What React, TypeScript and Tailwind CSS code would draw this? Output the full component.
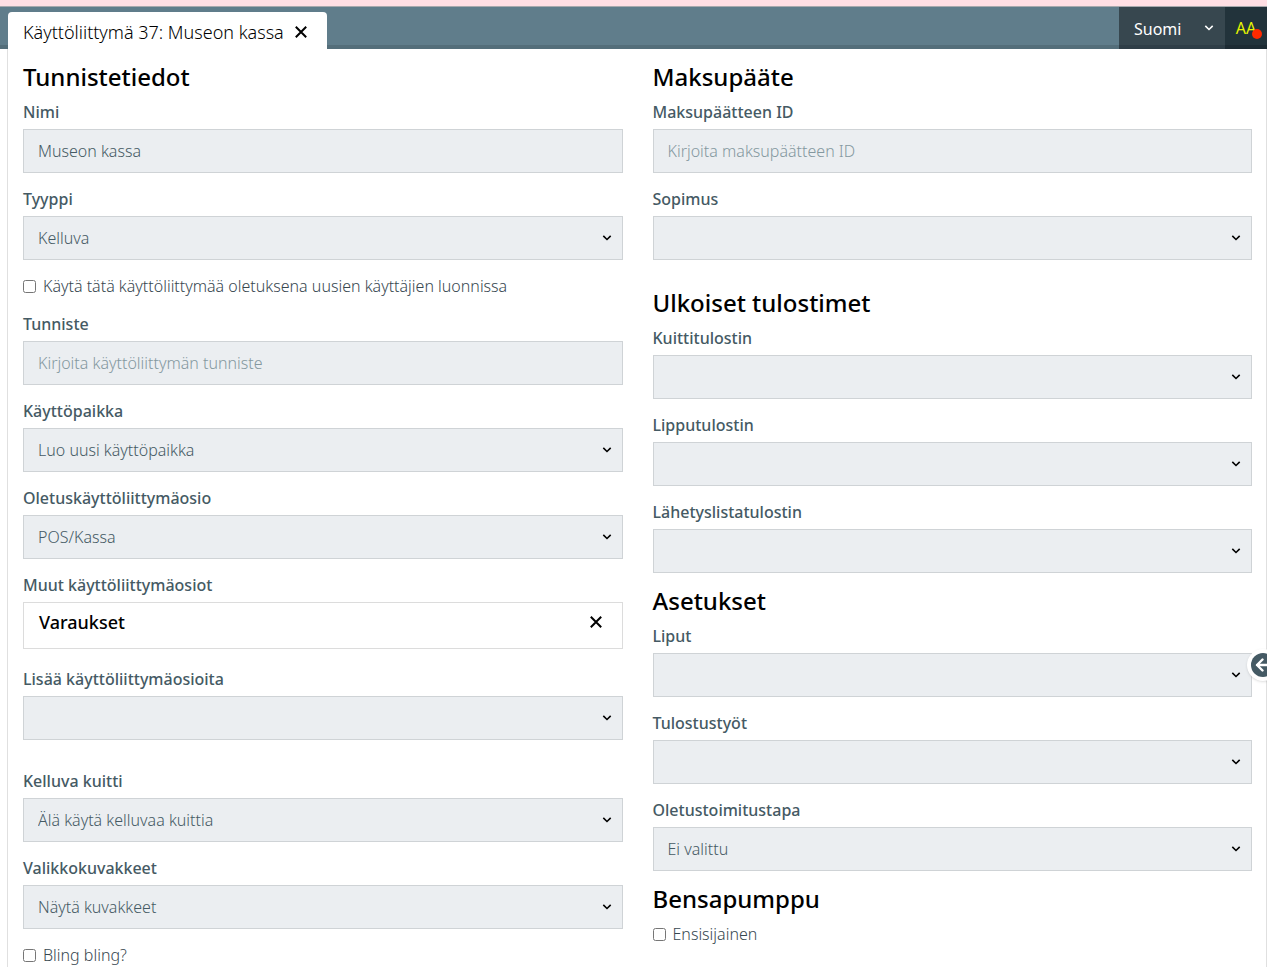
import React, { useState } from "react";

interface FieldProps {
    id: string;
    label: string;
}

interface TextFieldProps extends FieldProps {
    value?: string;
    placeholder?: string;
}

interface SelectFieldProps extends FieldProps {
    options?: string[];
}

const Chevron = ({ className }: { className: string }) => (
    <svg
        viewBox="0 0 10 6"
        aria-hidden="true"
        className={`pointer-events-none absolute h-[6px] w-[10px] ${className}`}
        fill="none"
        stroke="currentColor"
        strokeWidth="1.6"
    >
        <path d="M1.3 0.9 L5 4.5 L8.7 0.9" />
    </svg>
);

const Cross = () => (
    <svg viewBox="0 0 12 12" aria-hidden="true" className="h-3 w-3" stroke="currentColor" strokeWidth="2">
        <path d="M0.8 0.8 L11.2 11.2 M11.2 0.8 L0.8 11.2" />
    </svg>
);

const TextField: React.FC<TextFieldProps> = ({ id, label, value, placeholder }) => (
    <div className="flex flex-col gap-[5px]">
        <label htmlFor={id} className="text-base leading-6 font-medium text-[#455a64]">
            {label}
        </label>
        <input
            id={id}
            type="text"
            defaultValue={value}
            placeholder={placeholder}
            className="h-11 w-full border border-[#cfd3d6] bg-[#ebeef1] px-[14px] text-base font-light text-[#455a64] placeholder:text-[#84989f]"
        />
    </div>
);

const SelectField: React.FC<SelectFieldProps> = ({ id, label, options = [""] }) => (
    <div className="flex flex-col gap-[5px]">
        <label htmlFor={id} className="text-base leading-6 font-medium text-[#455a64]">
            {label}
        </label>
        <div className="relative">
            <select
                id={id}
                className="block h-11 w-full appearance-none border border-[#cfd3d6] bg-[#ebeef1] px-[14px] text-base font-light text-[#455a64]"
            >
                {options.map((option) => (
                    <option key={option}>{option}</option>
                ))}
            </select>
            <Chevron className="top-[19px] right-[11px] text-black" />
        </div>
    </div>
);

const CheckField: React.FC<FieldProps> = ({ id, label }) => (
    <div className="flex h-6 items-center gap-[7px]">
        <input id={id} type="checkbox" className="h-[13px] w-[13px]" />
        <label htmlFor={id} className="text-base leading-6 font-light text-[#37474f]">
            {label}
        </label>
    </div>
);

const Section = ({ title, children }: { title: string; children: React.ReactNode }) => (
    <section>
        <h2 className="mb-[7px] text-2xl leading-8 font-medium text-black">{title}</h2>
        <div className="flex flex-col gap-[14px]">{children}</div>
    </section>
);

const Header = () => (
    <header className="flex justify-between border-t border-[#a7a9ad] bg-[#607d8b] pl-2 shadow-[inset_0_-4px_0_#546e7a]">
        <div className="mt-[5px] flex h-[37px] items-center gap-[11px] rounded-t bg-white pt-[3px] pr-5 pl-[15px]">
            <h1 className="text-lg font-light text-black">Käyttöliittymä 37: Museon kassa</h1>
            <button type="button" aria-label="Sulje välilehti">
                <Cross />
            </button>
        </div>
        <div className="flex">
            <div className="relative">
                <select
                    aria-label="Kieli"
                    className="h-full w-[106px] appearance-none bg-[#37474f] pt-[2px] pl-[15px] text-base text-white shadow-[inset_0_-4px_0_#2f3e47]"
                >
                    <option>Suomi</option>
                </select>
                <Chevron className="top-[18px] right-[11px] text-white" />
            </div>
            <button
                type="button"
                className="relative w-[42px] bg-[#22333b] text-base text-[#e6f500] shadow-[inset_0_-4px_0_#1d2b33]"
            >
                AA
                <span className="absolute right-[5px] bottom-[10px] h-[10px] w-[10px] rounded-full bg-[#ff2a00]" />
            </button>
        </div>
    </header>
);

const App = () => {
    const [parts, setParts] = useState(["Varaukset"]);

    return (
        <div className="relative flex min-h-screen flex-col overflow-hidden bg-white font-['Noto_Sans','Open_Sans',sans-serif]">
            <div className="h-[6px] bg-[#ffdfe4]" />
            <Header />
            <main className="ml-[7px] grid grow grid-cols-2 gap-[30px] border-x border-[#e0e0e0] pt-3 pr-[14px] pl-[15px]">
                <Section title="Tunnistetiedot">
                    <TextField id="name" label="Nimi" value="Museon kassa" />
                    <SelectField id="type" label="Tyyppi" options={["Kelluva"]} />
                    <CheckField id="default" label="Käytä tätä käyttöliittymää oletuksena uusien käyttäjien luonnissa" />
                    <TextField id="identifier" label="Tunniste" placeholder="Kirjoita käyttöliittymän tunniste" />
                    <SelectField id="place" label="Käyttöpaikka" options={["Luo uusi käyttöpaikka"]} />
                    <SelectField id="part" label="Oletuskäyttöliittymäosio" options={["POS/Kassa"]} />
                    <div className="mb-1 flex flex-col gap-[5px]">
                        <h3 className="text-base leading-6 font-medium text-[#455a64]">Muut käyttöliittymäosiot</h3>
                        <ul className="border border-[#dcdcdc]">
                            {parts.map((part) => (
                                <li
                                    key={part}
                                    className="flex h-[45px] items-center justify-between pr-5 pb-2 pl-[15px] text-lg font-medium text-black"
                                >
                                    {part}
                                    <button
                                        type="button"
                                        aria-label={`Poista ${part}`}
                                        onClick={() => setParts(parts.filter((p) => p !== part))}
                                    >
                                        <Cross />
                                    </button>
                                </li>
                            ))}
                        </ul>
                    </div>
                    <div className="mb-[15px]">
                        <SelectField id="add-part" label="Lisää käyttöliittymäosioita" />
                    </div>
                    <SelectField id="receipt" label="Kelluva kuitti" options={["Älä käytä kelluvaa kuittia"]} />
                    <SelectField id="icons" label="Valikkokuvakkeet" options={["Näytä kuvakkeet"]} />
                    <CheckField id="bling" label="Bling bling?" />
                </Section>

                <div className="flex flex-col gap-3">
                    <div className="mb-[15px]">
                        <Section title="Maksupääte">
                            <TextField id="terminal" label="Maksupäätteen ID" placeholder="Kirjoita maksupäätteen ID" />
                            <SelectField id="contract" label="Sopimus" />
                        </Section>
                    </div>
                    <Section title="Ulkoiset tulostimet">
                        <SelectField id="receipt-printer" label="Kuittitulostin" />
                        <SelectField id="ticket-printer" label="Lipputulostin" />
                        <SelectField id="list-printer" label="Lähetyslistatulostin" />
                    </Section>
                    <Section title="Asetukset">
                        <SelectField id="tickets" label="Liput" />
                        <SelectField id="jobs" label="Tulostustyöt" />
                        <SelectField id="delivery" label="Oletustoimitustapa" options={["Ei valittu"]} />
                    </Section>
                    <Section title="Bensapumppu">
                        <CheckField id="primary" label="Ensisijainen" />
                    </Section>
                </div>
            </main>

            <button
                type="button"
                aria-label="Avaa sivupaneeli"
                className="absolute top-[649px] -right-3 flex h-8 w-8 items-center justify-center rounded-full bg-white shadow"
            >
                <svg viewBox="0 0 24 24" className="h-6 w-6" fill="none">
                    <circle cx="12" cy="12" r="12" fill="#455a64" />
                    <path
                        d="M18.5 12 H6 M11.5 6.5 L6 12 L11.5 17.5"
                        stroke="white"
                        strokeWidth="2.4"
                        strokeLinecap="round"
                        strokeLinejoin="round"
                    />
                </svg>
            </button>
        </div>
    );
};

export default App;
